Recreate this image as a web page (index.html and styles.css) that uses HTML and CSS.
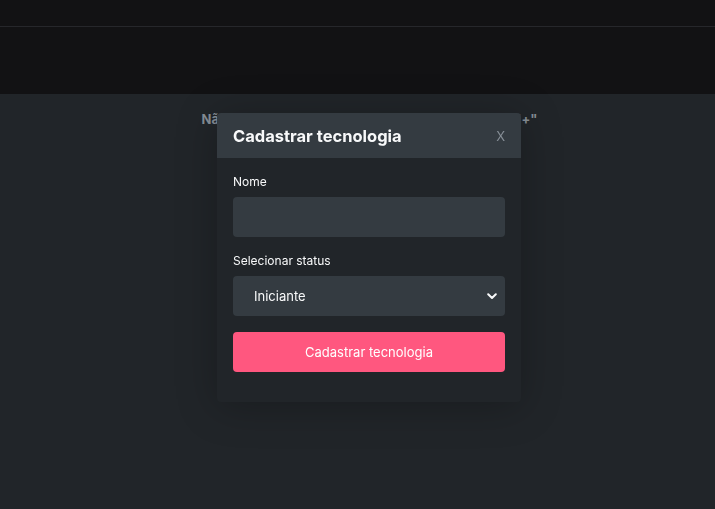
FILE: index.html
```html
<!DOCTYPE html>
<html lang="pt-BR">
<head>
  <meta charset="UTF-8">
  <meta name="viewport" content="width=device-width, initial-scale=1.0">
  <title>Kenzie Hub - Cadastrar tecnologia</title>
  <link rel="stylesheet" href="styles.css">
</head>
<body>
  <nav class="topbar"></nav>
  <header class="header"></header>

  <main class="content">
    <p class="empty">Não há tecnologias cadastradas. Clique no botão "+"</p>
  </main>

  <div class="overlay">
    <div class="modal">
      <div class="modal-header">
        <h2>Cadastrar tecnologia</h2>
        <button class="close" type="button">X</button>
      </div>
      <form class="modal-body">
        <div class="field">
          <label for="nome">Nome</label>
          <input id="nome" type="text">
        </div>
        <div class="field">
          <label for="status">Selecionar status</label>
          <div class="select-wrap">
            <select id="status">
              <option>Iniciante</option>
              <option>Intermediário</option>
              <option>Avançado</option>
            </select>
            <svg class="chevron" width="10" height="7" viewBox="0 0 10 7">
              <path d="M1.2 1.2 L5 5 L8.8 1.2" fill="none" stroke="#f8f9fa" stroke-width="2" stroke-linecap="round" stroke-linejoin="round"/>
            </svg>
          </div>
        </div>
        <button class="submit" type="submit">Cadastrar tecnologia</button>
      </form>
    </div>
  </div>
</body>
</html>
```

FILE: styles.css
```css
* {
  box-sizing: border-box;
}

body {
  margin: 0;
  font-family: Inter, "Noto Sans", sans-serif;
  background: #212529;
  color: #f8f9fa;
  height: 509px;
  overflow: hidden;
}

.topbar {
  height: 27px;
  background: #121214;
  border-bottom: 1px solid #26272b;
}

.header {
  height: 67px;
  background: #121214;
}

.content {
  padding: 17px 0 0 24px;
  text-align: center;
}

.empty {
  margin: 0;
  font-size: 13px;
  font-weight: 700;
  color: #868e96;
}

.overlay {
  position: fixed;
  inset: 0;
  display: flex;
  justify-content: center;
  align-items: flex-start;
  padding: 113px 0 0 23px;
}

.modal {
  width: 304px;
  background: #212529;
  border-radius: 4px;
  box-shadow: 0 4px 40px rgba(0, 0, 0, 0.25);
}

.modal-header {
  height: 45px;
  background: #343b41;
  border-radius: 4px 4px 0 0;
  display: flex;
  align-items: center;
  justify-content: space-between;
  padding: 0 16px;
}

.modal-header h2 {
  margin: 0;
  font-size: 16.5px;
  font-weight: 700;
  color: #f8f9fa;
}

.close {
  background: none;
  border: none;
  padding: 0;
  color: #868e96;
  font-family: Inter, sans-serif;
  font-size: 13px;
  font-weight: 400;
  cursor: pointer;
}

.modal-body {
  display: flex;
  flex-direction: column;
  gap: 16px;
  padding: 16px 16px 30px;
}

.field {
  display: flex;
  flex-direction: column;
  gap: 7px;
}

.field label {
  font-size: 12px;
  line-height: 16px;
  color: #f8f9fa;
}

.field input,
.field select {
  width: 100%;
  height: 40px;
  background: #343b41;
  border: none;
  border-radius: 4px;
  color: #f8f9fa;
  font-family: Inter, sans-serif;
  font-size: 13px;
  outline: none;
}

.field input {
  padding: 0 16px;
}

.select-wrap {
  position: relative;
}

.field select {
  appearance: none;
  padding: 0 30px 0 21px;
}

.chevron {
  position: absolute;
  right: 8px;
  top: 17px;
  pointer-events: none;
}

.submit {
  height: 40px;
  background: #ff577f;
  border: none;
  border-radius: 4px;
  color: #ffffff;
  font-family: Inter, sans-serif;
  font-size: 13px;
  cursor: pointer;
}
```
